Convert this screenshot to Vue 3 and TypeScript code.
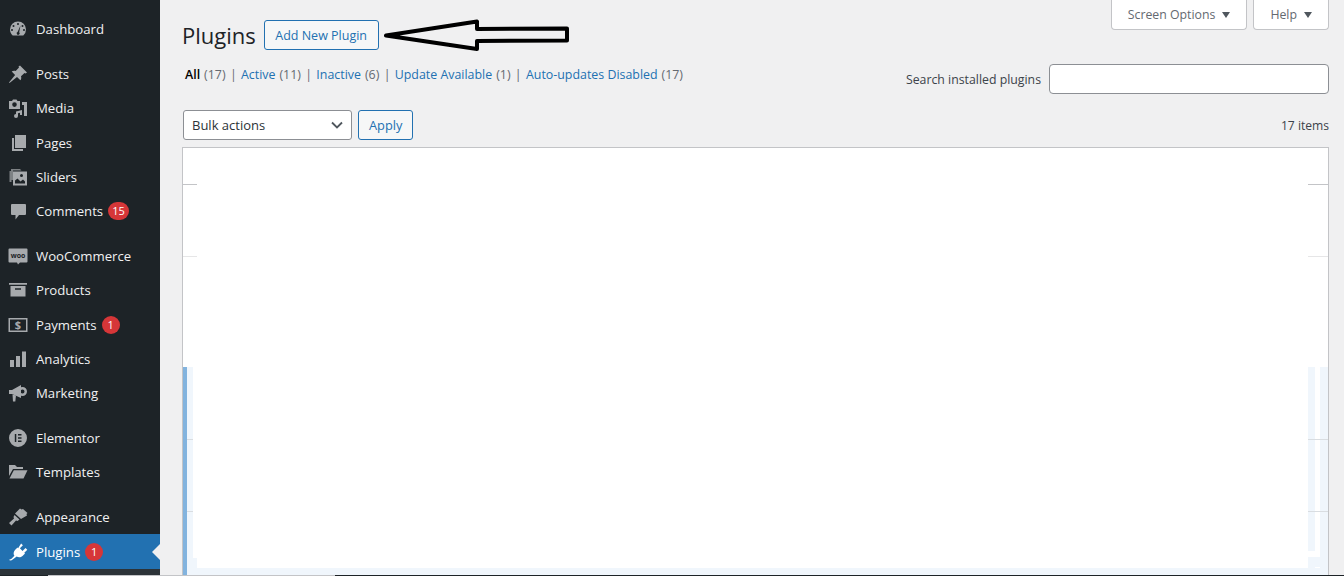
<script setup lang="ts">
type Item = { label: string; icon: string; badge?: string; gap?: boolean; current?: boolean }
const menu: Item[] = [
  { label: 'Dashboard', icon: 'dash' },
  { label: 'Posts', icon: 'pin', gap: true },
  { label: 'Media', icon: 'media' },
  { label: 'Pages', icon: 'pages' },
  { label: 'Sliders', icon: 'sliders' },
  { label: 'Comments', icon: 'comment', badge: '15' },
  { label: 'WooCommerce', icon: 'woo', gap: true },
  { label: 'Products', icon: 'box' },
  { label: 'Payments', icon: 'pay', badge: '1' },
  { label: 'Analytics', icon: 'bars' },
  { label: 'Marketing', icon: 'mega' },
  { label: 'Elementor', icon: 'el', gap: true },
  { label: 'Templates', icon: 'folder' },
  { label: 'Appearance', icon: 'brush', gap: true },
  { label: 'Plugins', icon: 'plug', badge: '1', current: true },
]
const filters = [
  { label: 'All', count: '(17)', current: true },
  { label: 'Active', count: '(11)' },
  { label: 'Inactive', count: '(6)' },
  { label: 'Update Available', count: '(1)' },
  { label: 'Auto-updates Disabled', count: '(17)' },
]
</script>

<template>
  <div class="page">
    <aside class="side">
      <a v-for="m in menu" :key="m.label" class="item" :class="{ gap: m.gap, current: m.current }">
        <svg class="ico" viewBox="0 0 20 20" aria-hidden="true">
          <path v-if="m.icon === 'dash'" fill-rule="evenodd" d="M10 2.500a8 8 0 0 0-8 8c0 2.400 1 4.500 2.700 6h10.600a8 8 0 0 0 2.700-6 8 8 0 0 0-8-8zM10 4a1 1 0 1 1 0 2 1 1 0 0 1 0-2zM5.500 6a1 1 0 1 1 0 2 1 1 0 0 1 0-2zM14.500 6a1 1 0 1 1 0 2 1 1 0 0 1 0-2zM4 10a1 1 0 1 1 0 2 1 1 0 0 1 0-2zM16 10a1 1 0 1 1 0 2 1 1 0 0 1 0-2zM12.500 6.500l-1.300 6.700a1.500 1.500 0 1 1-1.600-.3z" />
          <path v-else-if="m.icon === 'pin'" d="M12 1.500l7 7-1.500 1-1-.5-3.500 3.300c.6 1.600.2 3-.6 4L9 12.900 1.500 19l-.5-.5L7.100 11 3.700 7.600c1-.8 2.400-1.200 4-.6L11 3.500l-.5-1z" />
          <g v-else-if="m.icon === 'media'">
            <path fill-rule="evenodd" d="M1 3h3l1-1.500h3.500l1 1.500H12v8H1zM6.500 4.300a2.300 2.300 0 1 0 0 4.600 2.300 2.300 0 0 0 0-4.600z" />
            <path d="M14 4h5v14h-3V7h-2zM8 13.500l6-1.500v5h-2v-2.200l-2 .5V18a2 2 0 1 1-2-2z" />
          </g>
          <path v-else-if="m.icon === 'pages'" d="M7 2h11v13H7zM4 5h2v11h9v2H4z" />
          <g v-else-if="m.icon === 'sliders'">
            <path d="M3 2h9l1.500 1.500H5V13H3zM1.500 4H3.500v11h-2z" opacity=".7" />
            <path fill-rule="evenodd" d="M5 4.500h14v14H5zM13.500 7a1.500 1.500 0 1 0 0 3 1.500 1.500 0 0 0 0-3zM7 16.500h10v-2l-2-2-2.500 2-3-3L7 13.500z" />
          </g>
          <path v-else-if="m.icon === 'comment'" d="M4 3h13a1 1 0 0 1 1 1v9a1 1 0 0 1-1 1h-6l-3.500 4.500V14H4a1 1 0 0 1-1-1V4a1 1 0 0 1 1-1z" />
          <g v-else-if="m.icon === 'woo'">
            <path d="M1.500 2.500h17a1 1 0 0 1 1 1v12a1 1 0 0 1-1 1h-6.500l-2 2-1-2H1.500a1 1 0 0 1-1-1v-12a1 1 0 0 1 1-1z" />
            <text class="woo" x="10" y="11.800" text-anchor="middle">woo</text>
          </g>
          <path v-else-if="m.icon === 'box'" fill-rule="evenodd" d="M1 3h18v1.800H1zM2.500 6h15v10.500h-15zM7 8.200v1.500h6V8.200z" />
          <g v-else-if="m.icon === 'pay'">
            <path fill-rule="evenodd" d="M0.500 3h19v14h-19zM2 4.500v11h16v-11z" />
            <text class="dollar" x="10" y="14" text-anchor="middle">$</text>
          </g>
          <path v-else-if="m.icon === 'bars'" d="M2 11h4v7H2zM8 7h4v11H8zM14 2.500h4V18h-4z" />
          <g v-else-if="m.icon === 'mega'">
            <path d="M1 7h3l9-5v13L4 11H1z" />
            <path fill-rule="evenodd" d="M14.500 4a4.500 4.500 0 1 1 0 9 4.500 4.500 0 0 1 0-9zM14.500 6.500a2 2 0 1 0 0 4 2 2 0 0 0 0-4z" />
            <path d="M4.500 11.500l3.500 1-.7 6H5z" />
          </g>
          <path v-else-if="m.icon === 'el'" fill-rule="evenodd" d="M10 1a9 9 0 1 0 0 18 9 9 0 0 0 0-18zM6.800 6h1.500v8H6.800zM10 6h3.500v1.500H10zM10 9.200h3.500v1.500H10zM10 12.500h3.500V14H10z" />
          <g v-else-if="m.icon === 'folder'">
            <path d="M1 3h6l2 2h6v2H5L1 14z" />
            <path d="M5.800 8.300H19.500L15.500 16.500H1.500z" />
          </g>
          <path v-else-if="m.icon === 'brush'" d="M12 1.500l1.500 1 1.500-.5 4.500 4-1 1 .5 1.500-6 3.500-6-5.500zM6.500 8l5 4.500-2 1.500-1.500-.5-4.500 5-2.500-2.500 5-4.500-.5-1.500z" />
          <path v-else-if="m.icon === 'plug'" d="M13.100 1.500l1.800 1.800-3 3 2.600 2.600 3-3 1.800 1.800-3 3 .7.700-2.500 2.500c-1.700 1.700-4.100 1.800-5.800.6L5 17.300c-.9.900-2 1.300-3.300 1.200l-.2-1.300c.9 0 1.700-.2 2.300-.8l2.600-2.600c-1.200-1.700-1-4.100.6-5.800L9.500 5.500l.6.700z" />
        </svg>
        <span class="lbl">{{ m.label }}</span>
        <span v-if="m.badge" class="badge">{{ m.badge }}</span>
        <i v-if="m.current" class="notch"></i>
      </a>
      <div class="sub"></div>
    </aside>

    <main class="main">
      <div class="tabs">
        <button class="tab">Screen Options <span class="tri"></span></button>
        <button class="tab">Help <span class="tri"></span></button>
      </div>

      <div class="head">
        <h1>Plugins</h1>
        <button class="btn add">Add New Plugin</button>
        <svg class="arrow" width="190" height="36" viewBox="0 0 190 36" aria-hidden="true">
          <path d="M4 19.500 L95 5.500 L95 13 L185 12.500 L185 24.500 L95 25 L95 33 Z" fill="none" stroke="#000" stroke-width="4" stroke-linejoin="round" />
        </svg>
      </div>

      <div class="filters-row">
        <ul class="filters">
          <li v-for="(f, i) in filters" :key="f.label">
            <span v-if="i" class="sep">|</span>
            <a :class="{ on: f.current }">{{ f.label }}</a>
            <span class="count">{{ f.count }}</span>
          </li>
        </ul>
        <div class="search">
          <label>Search installed plugins</label>
          <span class="input"></span>
        </div>
      </div>

      <div class="actions">
        <div class="select">Bulk actions
          <svg width="12" height="8" viewBox="0 0 12 8" aria-hidden="true"><path d="M1 1.500l5 5 5-5" fill="none" stroke="#50575e" stroke-width="1.800" /></svg>
        </div>
        <button class="btn apply">Apply</button>
        <span class="items">17 items</span>
      </div>

      <div class="table">
        <div class="row head-row"><i class="gut l"></i><i class="mid"></i><i class="gut r"></i></div>
        <div class="row std"><i class="gut l faint"></i><i class="mid"></i><i class="gut r faint"></i></div>
        <div class="row short"><i class="gut l none"></i><i class="mid"></i><i class="gut r none"></i></div>
        <div class="active">
          <div class="row std first"><i class="gut l"></i><i class="mid"></i><i class="gut r"></i></div>
          <div class="row std"><i class="gut l"></i><i class="mid"></i><i class="gut r"></i></div>
          <div class="row tail"><i class="gut l none"></i><i class="mid"></i><i class="gut r none"></i></div>
          <div class="foot"></div>
        </div>
      </div>
    </main>
    <i class="edge"></i>
  </div>
</template>

<style>
html, body { margin: 0; background: #f0f0f1; overflow: hidden; }
</style>

<style scoped>
.page { position: relative; display: flex; width: 1344px; height: 576px; overflow: hidden; background: #f0f0f1; font-family: "Open Sans", "Noto Sans", sans-serif; font-size: 12.3px; color: #3c434a; }
.side { width: 160px; flex: none; background: #1d2327; padding-top: 12.300px; box-sizing: border-box; display: flex; flex-direction: column; font-size: 13.2px; }
.item { position: relative; display: flex; align-items: center; height: 34.400px; flex: none; color: #f0f0f1; }
.item.gap { margin-top: 10px; }
.item.current { margin-top: .7px; background: #2271b1; color: #fff; }
.sub { flex: 1; background: #2c3338; }
.ico { width: 20px; height: 20px; margin-left: 8px; margin-right: 8px; fill: #a7aaad; color: #a7aaad; flex: none; }
.current .ico { fill: #fff; color: #fff; }
.woo { font-size: 7px; font-weight: 700; fill: #1d2327; }
.dollar { font-size: 11px; font-weight: 700; fill: #a7aaad; }
.badge { margin-left: 5px; min-width: 18px; padding: 0 4px; box-sizing: border-box; height: 18px; line-height: 18px; border-radius: 9px; background: #d63638; color: #fff; font-size: 11px; text-align: center; }
.notch { position: absolute; right: 0; top: 50%; margin-top: -8px; border: 8px solid transparent; border-right-color: #f0f0f1; border-left-width: 0; }
.main { flex: 1; min-width: 0; padding: 0 15px 0 23px; display: flex; flex-direction: column; }
.tabs { display: flex; justify-content: flex-end; gap: 6px; height: 30px; flex: none; }
.tab { height: 30px; padding: 0 16px; background: #fff; border: 1px solid #c3c4c7; border-top: 0; border-radius: 0 0 4px 4px; font: inherit; color: #646970; display: flex; align-items: center; gap: 7px; }
.tri { border: 4.500px solid transparent; border-top: 6px solid #50575e; border-bottom: 0; }
.head { display: flex; align-items: center; margin-top: -10px; height: 30px; flex: none; position: relative; }
h1 { margin: 0 0 0 -1px; font-size: 22px; font-weight: 400; color: #1d2327; line-height: 30px; }
.btn { font: inherit; color: #2271b1; border: 1px solid #2271b1; background: #f6f7f7; border-radius: 3px; height: 30px; padding: 0 10px; box-sizing: border-box; }
.add { margin-left: 8px; font-size: 12.5px; padding: 0 10.500px; }
.arrow { position: absolute; left: 199px; top: -4px; }
.filters-row { display: flex; justify-content: space-between; margin-top: 14px; height: 46px; flex: none; }
.filters { list-style: none; margin: 1px 0 0; padding: 0 0 0 2px; display: flex; line-height: 20px; height: 20px; font-size: 12.4px; }
.filters li { color: #646970; white-space: pre; }
.filters a { color: #2271b1; }
.filters a.on { color: #000; font-weight: 600; }
.sep { margin: 0 4.300px; color: #646970; }
.count { margin-left: 4px; }
.search { display: flex; align-items: center; gap: 8px; height: 30px; }
.search label { color: #3c434a; }
.input { width: 278px; height: 28px; background: #fff; border: 1px solid #8c8f94; border-radius: 4px; display: block; }
.actions { display: flex; align-items: center; height: 30px; flex: none; }
.select { width: 169px; height: 30px; box-sizing: border-box; background: #fff; border: 1px solid #8c8f94; border-radius: 3px; padding: 0 8px; display: flex; align-items: center; justify-content: space-between; font-size: 13px; color: #2c3338; }
.apply { margin-left: 6px; font-size: 12.8px; }
.items { margin-left: auto; color: #3c434a; font-size: 12.100px; }
.table { margin: 7px 0 0 -1px; flex: 1; background: #fff; border: 1px solid #c3c4c7; border-bottom: 0; display: flex; flex-direction: column; min-height: 0; }
.row { display: flex; flex: none; }
.gut { display: block; box-sizing: border-box; border-bottom: 1px solid #c3c4c7; }
.gut.l { width: 14px; }
.gut.r { width: 20px; }
.gut.faint { border-bottom-color: #e6e6e7; }
.gut.none { border-bottom-color: transparent; }
.mid { flex: 1; display: block; background: #fff; }
.head-row { height: 37px; }
.std { height: 72px; }
.std.first { height: 73px; }
.short { height: 110px; }
.active { flex: 1; display: flex; flex-direction: column; border-left: 4px solid #82b3de; min-height: 0; }
.active .gut { background: #f0f6fc; border-bottom-color: #d9dde1; }
.active .gut.l { width: 6px; }
.active .gut.r { background: linear-gradient(90deg, #f0f6fc 0 7px, #fff 7px 12px, #f0f6fc 12px); }
.active .gut.none { border-bottom-color: transparent; }
.tail { height: 56px; }
.active .tail .gut.r {
  background:
    linear-gradient(#f0f6fc, #f0f6fc) left bottom / 100% 10px no-repeat,
    linear-gradient(#fff, #fff) left bottom 10px / 12px 6px no-repeat,
    linear-gradient(90deg, #f0f6fc 0 7px, #fff 7px 12px, #f0f6fc 12px);
}
.tail .mid { background: linear-gradient(#f0f6fc, #f0f6fc) left bottom / 4px 10px no-repeat, #fff; }
.foot { background: #f0f6fc; flex: 1; }
.edge { position: absolute; left: 0; right: 0; bottom: 0; height: 1px; background: linear-gradient(90deg, #1d2327 0 48px, #c3c4c7 48px 335px, #1d2327 335px); }
</style>
